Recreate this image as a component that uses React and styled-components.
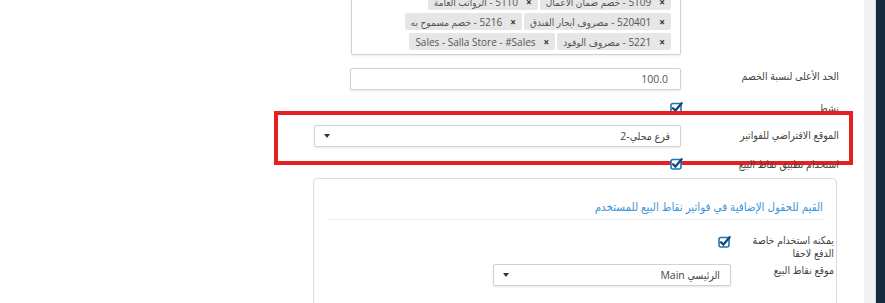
import React from "react";
import styled, { createGlobalStyle } from "styled-components";

const GlobalStyle = createGlobalStyle`
  html, body {
    margin: 0;
    padding: 0;
    background: #fff;
    overflow: hidden;
  }
  body {
    font-family: "Open Sans", "DejaVu Sans Condensed", "DejaVu Sans", sans-serif;
    font-size: 10.5px;
    color: #444;
  }
`;

const Page = styled.div`
  display: flex;
  height: 303px;
  overflow: hidden;
`;

const Content = styled.div`
  flex: 1;
  direction: rtl;
  padding-right: 25px;
  overflow: hidden;
`;

const Scrolled = styled.div`
  margin-top: -12px;
`;

const GrayStrip = styled.div`
  width: 11px;
  background: #f2f2f2;
  border-right: 1px solid #d8d8d8;
`;

const DarkStrip = styled.div`
  width: 9px;
  background: #152a3e;
`;

const FormRow = styled.div`
  position: relative;
  display: flex;
  align-items: flex-start;
  margin-top: ${(p) => p.$mt || 0}px;
`;

const Label = styled.div`
  width: ${(p) => p.$w || 140}px;
  margin-left: ${(p) => p.$gap || 18}px;
  padding-top: ${(p) => p.$pt || 0}px;
  line-height: 13px;
  color: #444;
  font-size: 10.5px;
  flex-shrink: 0;
`;

const TagBox = styled.div`
  width: 330px;
  box-sizing: border-box;
  border: 1px solid #d2d2d2;
  border-radius: 2px;
  box-shadow: 0 1px 2px rgba(0, 0, 0, 0.08);
  padding: 4px 9px 4px 4px;
  display: flex;
  flex-direction: column;
  gap: 3px;
`;

const TagLine = styled.div`
  display: flex;
  gap: 2px;
`;

const Tag = styled.span`
  display: inline-flex;
  align-items: center;
  height: 17px;
  box-sizing: border-box;
  padding: 0 6px 0 6px;
  background: #e6e6e6;
  border-radius: 2px;
  color: #555;
  font-size: 10px;
  white-space: nowrap;
`;

const TagX = styled.span`
  font-weight: bold;
  color: #333;
  font-size: 10px;
  margin-left: 8px;
`;

const TextInput = styled.div`
  width: ${(p) => p.$w}px;
  height: 22px;
  box-sizing: border-box;
  border: 1px solid #d2d2d2;
  border-radius: 2px;
  box-shadow: 0 1px 2px rgba(0, 0, 0, 0.1);
  padding: 0 12px;
  display: flex;
  align-items: center;
  color: #555;
  font-size: 10.5px;
  background: #fff;
`;

const SelectBox = styled(TextInput)`
  justify-content: space-between;
  padding: 0 10px 0 9px;
  color: #444;
`;

const Caret = styled.span`
  width: 0;
  height: 0;
  border-left: 3.5px solid transparent;
  border-right: 3.5px solid transparent;
  border-top: 4px solid #333;
`;

const Highlight = styled.div`
  position: absolute;
  left: 274px;
  right: -14px;
  top: -14px;
  bottom: -18px;
  border: 4px solid #e5201f;
  pointer-events: none;
`;

const Card = styled.div`
  margin-top: 7px;
  margin-right: 2px;
  width: 524px;
  height: 150px;
  box-sizing: border-box;
  border: 1px solid #dcdcdc;
  border-radius: 4px;
  padding: 0 2px 0 15px;
`;

const CardTitle = styled.div`
  margin: 20px 11px 0 0;
  padding-bottom: 4px;
  border-bottom: 1px solid #e8eef2;
  color: #3d95d8;
  font-size: 11.5px;
  line-height: 16px;
`;

const CheckWrap = styled.div`
  margin-right: ${(p) => p.$mr || 0}px;
  margin-top: ${(p) => p.$mt || 0}px;
  display: flex;
`;

const CheckIcon = () => (
  <svg width="13" height="12" viewBox="0 0 13 12">
    <rect x="1" y="1.5" width="10" height="9.5" rx="2" fill="#fff" stroke="#1f74b4" strokeWidth="1.6" />
    <path d="M3 6.2 L5.4 8.6 L11.6 1.2" fill="none" stroke="#0c4a7e" strokeWidth="2.3" strokeLinecap="round" />
  </svg>
);

export default function App() {
  return (
    <>
      <GlobalStyle />
      <Page>
        <Content>
          <Scrolled>
            <FormRow>
              <Label />
              <TagBox>
                <TagLine>
                  <Tag><TagX>×</TagX>5109 - خصم ضمان الاعمال</Tag>
                  <Tag><TagX>×</TagX>5110 - الرواتب العامة</Tag>
                </TagLine>
                <TagLine>
                  <Tag><TagX>×</TagX>520401 - مصروف ايجار الفندق</Tag>
                  <Tag><TagX>×</TagX>5216 - خصم مسموح به</Tag>
                </TagLine>
                <TagLine>
                  <Tag><TagX>×</TagX>5221 - مصروف الوفود</Tag>
                  <Tag><TagX>×</TagX>Sales - Salla Store - #Sales</Tag>
                </TagLine>
              </TagBox>
            </FormRow>

            <FormRow $mt={13}>
              <Label $pt={2}>الحد الأعلى لنسبة الخصم</Label>
              <TextInput $w={331}>100.0</TextInput>
            </FormRow>

            <FormRow $mt={12}>
              <Label $pt={0}>نشط</Label>
              <CheckWrap $mr={-2}><CheckIcon /></CheckWrap>
            </FormRow>

            <FormRow $mt={10}>
              <Label $pt={4}>الموقع الافتراضي للفواتير</Label>
              <SelectBox $w={367}>
                <span>فرع محلي-2</span>
                <Caret />
              </SelectBox>
              <Highlight />
            </FormRow>

            <FormRow $mt={11}>
              <Label $pt={0}>استخدام تطبيق نقاط البيع</Label>
              <CheckWrap $mr={-2}><CheckIcon /></CheckWrap>
            </FormRow>

            <Card>
              <CardTitle>القيم للحقول الإضافية في فواتير نقاط البيع للمستخدم</CardTitle>
              <FormRow $mt={14}>
                <Label $w={90} $gap={13}>يمكنه استخدام خاصة الدفع لاحقا</Label>
                <CheckWrap $mt={2}><CheckIcon /></CheckWrap>
              </FormRow>
              <FormRow $mt={4}>
                <Label $w={90} $gap={13}>موقع نقاط البيع</Label>
                <SelectBox $w={238}>
                  <span>الرئيسي Main</span>
                  <Caret />
                </SelectBox>
              </FormRow>
            </Card>
          </Scrolled>
        </Content>
        <GrayStrip />
        <DarkStrip />
      </Page>
    </>
  );
}
